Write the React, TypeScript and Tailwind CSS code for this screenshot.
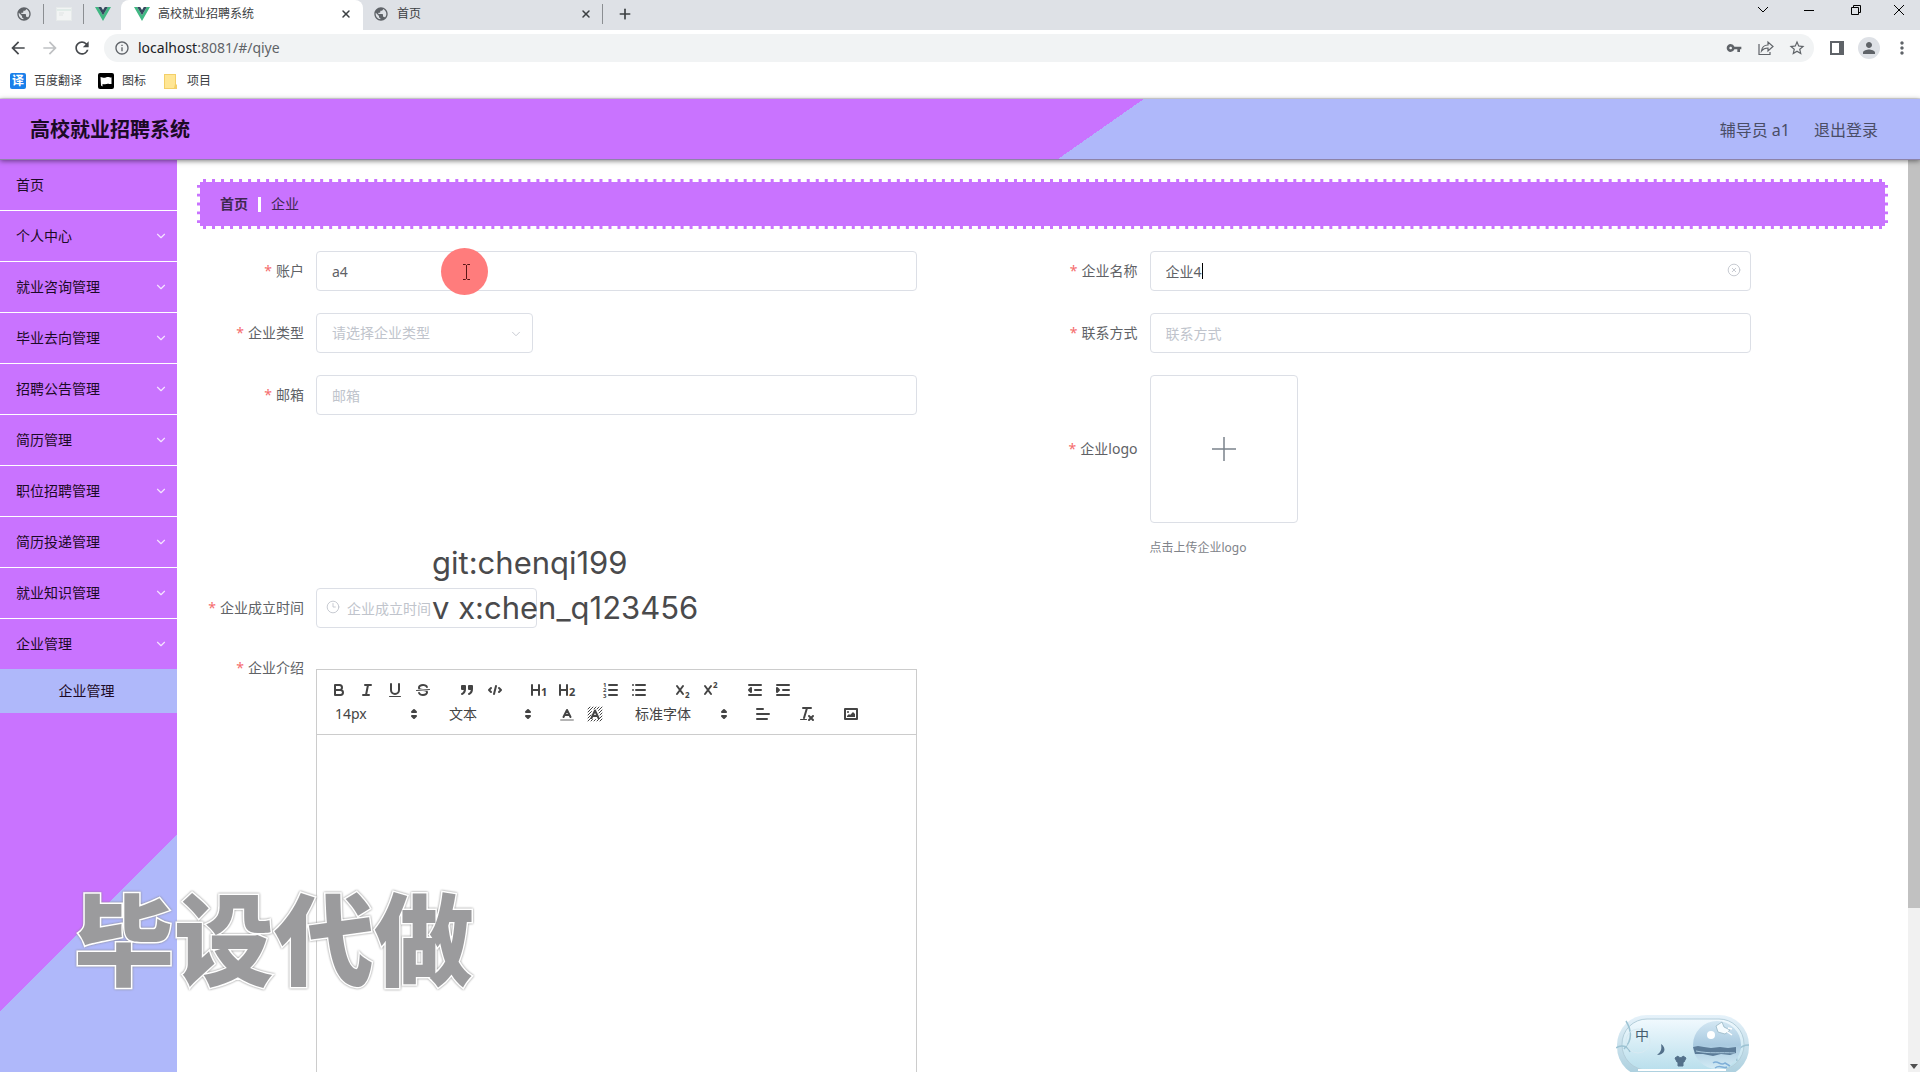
import React from "react";
import type { ReactNode } from "react";
import {
  MdArrowBack,
  MdArrowForward,
  MdInfoOutline,
  MdMoreVert,
  MdPerson,
  MdPublic,
  MdRefresh,
  MdStarBorder,
  MdVpnKey,
} from "react-icons/md";
import { ChevronDown, CircleX, Clock3, Plus, X } from "lucide-react";

const menu = [
  "首页",
  "个人中心",
  "就业咨询管理",
  "毕业去向管理",
  "招聘公告管理",
  "简历管理",
  "职位招聘管理",
  "简历投递管理",
  "就业知识管理",
  "企业管理",
];

function VueLogo() {
  return (
    <svg viewBox="0 0 16 14" className="h-3.5 w-4 shrink-0" aria-hidden="true">
      <path d="M0 0h3.200L8 8.300 12.800 0H16L8 13.900z" fill="#41b883" />
      <path d="M3.200 0h3L8 3.100 9.800 0h3L8 8.300z" fill="#35495e" />
    </svg>
  );
}

function BrowserTabs() {
  return (
    <div className="flex h-[30px] items-stretch bg-[#dee1e6] text-xs text-[#3c4043]">
      <div className="flex w-[121px] items-center rounded-br-lg pb-0.5">
        <button aria-label="新标签页" className="flex w-[43px] justify-center pl-1">
          <MdPublic className="size-4 text-[#5f6368]" />
        </button>
        <span className="h-5 w-px bg-[#8b8e92]" />
        <button aria-label="固定标签页" className="flex w-[39px] justify-center">
          <svg viewBox="0 0 16 14" className="h-3.5 w-4" aria-hidden="true">
            <rect x=".5" y=".5" width="15" height="13" fill="#f2f4f4" stroke="#e6eaea" />
            <path d="M1 3h14" stroke="#cfe3dc" />
            <path d="M3 6h5M3 8h4" stroke="#e0e4e4" />
          </svg>
        </button>
        <span className="h-5 w-px bg-[#8b8e92]" />
        <button aria-label="Vue" className="flex w-[37px] justify-center">
          <VueLogo />
        </button>
      </div>
      <div className="flex w-[242px] items-center rounded-t-lg bg-white pl-[13px] pr-2.5 pb-0.5">
        <VueLogo />
        <span className="ml-2 flex-1 truncate">高校就业招聘系统</span>
        <button aria-label="关闭标签页" className="mr-px">
          <X className="size-3" strokeWidth={3} />
        </button>
      </div>
      <div className="flex w-[240px] items-center px-2.5 pb-0.5">
        <MdPublic className="size-4 text-[#5f6368]" />
        <span className="ml-2 flex-1 truncate">首页</span>
        <button aria-label="关闭标签页">
          <X className="size-3" strokeWidth={3} />
        </button>
        <span className="-mr-2.5 ml-2.5 h-5 w-px bg-[#8b8e92]" />
      </div>
      <button aria-label="新建标签页" className="ml-3.5 pb-0.5">
        <Plus className="size-4" strokeWidth={2.5} />
      </button>
      <div className="ml-auto flex items-center pb-2.5 text-black">
        <button aria-label="搜索标签页" className="flex w-[46px] justify-center">
          <svg viewBox="0 0 12 12" className="size-3" fill="none" stroke="currentColor">
            <path d="M1 3l5 5 5-5" />
          </svg>
        </button>
        <button aria-label="最小化" className="flex w-[46px] justify-center">
          <svg viewBox="0 0 12 12" className="size-3" fill="none" stroke="currentColor">
            <path d="M1 6.500h10" />
          </svg>
        </button>
        <button aria-label="还原" className="flex w-[47px] justify-center">
          <svg viewBox="0 0 12 12" className="size-3" fill="none" stroke="currentColor">
            <path d="M1.500 3.500h7v7h-7zM3.500 3.500v-2h7v7h-2" />
          </svg>
        </button>
        <button aria-label="关闭" className="mr-px flex w-10 justify-center">
          <svg viewBox="0 0 12 12" className="size-3" fill="none" stroke="currentColor">
            <path d="M1 1l10 10M11 1L1 11" />
          </svg>
        </button>
      </div>
    </div>
  );
}

function BrowserToolbar() {
  return (
    <div className="flex h-9 items-center bg-white pl-2 pr-2 text-[#5f6368]">
      <button aria-label="后退" className="mr-3">
        <MdArrowBack className="size-5 text-[#46494d]" />
      </button>
      <button aria-label="前进" className="mr-3">
        <MdArrowForward className="size-5 text-[#bfc1c3]" />
      </button>
      <button aria-label="重新加载" className="mr-3">
        <MdRefresh className="size-5 text-[#46494d]" />
      </button>
      <div className="flex h-7 flex-1 items-center rounded-full bg-[#f1f3f4] pl-2.5 pr-2">
        <MdInfoOutline className="size-4" />
        <div className="ml-2 flex flex-1 text-sm">
          <span className="text-[#202124]">localhost</span>
          <span>:8081/#/qiye</span>
        </div>
        <button aria-label="密码" className="mr-4">
          <MdVpnKey className="size-4" />
        </button>
        <button aria-label="分享" className="mr-3.5">
          <svg viewBox="0 0 16 16" className="size-4" fill="none" stroke="currentColor" strokeWidth="1.200">
            <path d="M1 4v10.500h11V12" />
            <path d="M3.500 11C4 7 6.500 5 10 5V2l5 4.500L10 11V8C7 8 5 9 3.500 11z" />
          </svg>
        </button>
        <button aria-label="收藏">
          <MdStarBorder className="size-[18px]" />
        </button>
      </div>
      <button aria-label="侧边栏" className="ml-4">
        <svg viewBox="0 0 14 14" className="size-3.5" aria-hidden="true">
          <rect x="1" y="1" width="12" height="12" fill="none" stroke="currentColor" strokeWidth="2" />
          <path d="M9 1h4v12H9z" fill="currentColor" />
        </svg>
      </button>
      <button
        aria-label="个人资料"
        className="ml-3.5 flex size-[22px] items-center justify-center rounded-full bg-[#dee1e6]"
      >
        <MdPerson className="size-[18px]" />
      </button>
      <button aria-label="更多" className="ml-3">
        <MdMoreVert className="size-5" />
      </button>
    </div>
  );
}

function Bookmarks() {
  return (
    <nav className="flex h-[33px] items-center border-b border-[#e3e3e6] bg-white pb-0.5 pl-2.5 text-xs text-[#3c4043]">
      <a href="#fanyi" className="flex items-center gap-2">
        <span className="flex size-4 items-center justify-center rounded-xs bg-[#1a80ea] text-xs font-bold text-white">
          译
        </span>
        百度翻译
      </a>
      <a href="#icons" className="ml-4 flex items-center gap-2">
        <svg viewBox="0 0 16 16" className="size-4" aria-hidden="true">
          <rect width="16" height="16" rx="2" />
          <path d="M2.500 4l2 .500c2 .800 3.500-.500 5.500-.500s2 .800 3.500.300v6.700c-2 .300-2.500-.500-4-.300s-2.500 1-5 .300v2.500l-1.500-1z" fill="#fff" />
        </svg>
        图标
      </a>
      <a href="#projects" className="ml-[18px] flex items-center gap-2.5">
        <svg viewBox="0 0 13 15" className="h-[15px] w-[13px]" aria-hidden="true">
          <path d="M0 0h12v10l1 1v4H0z" fill="#f3cf68" />
          <path d="M1 1h10v9l-1 4H1z" fill="#ffe694" />
        </svg>
        项目
      </a>
    </nav>
  );
}

function Sidebar() {
  return (
    <aside className="w-[177px] shrink-0 bg-[linear-gradient(135deg,#c973ff_602px,#afb8fa_602px)] text-sm text-[#1c0a26]">
      <ul>
        {menu.map((name, i) => (
          <li key={name}>
            <button
              className={
                i < menu.length - 1
                  ? "flex h-[51px] w-full items-center justify-between border-b border-white pl-4 pr-[9px]"
                  : "flex h-[50px] w-full items-center justify-between pl-4 pr-[9px]"
              }
            >
              {name}
              {i > 0 && <ChevronDown className="size-3.5 text-white/80" strokeWidth={2} />}
            </button>
          </li>
        ))}
        <li>
          <a href="#/qiye" className="flex h-11 items-center justify-center bg-[#afb8fa] pr-1">
            企业管理
          </a>
        </li>
      </ul>
    </aside>
  );
}

function Field({
  id,
  label,
  tall,
  short,
  children,
}: {
  id: string;
  label: string;
  tall?: boolean;
  short?: boolean;
  children: ReactNode;
}) {
  const height = tall ? "h-[148px]" : short ? "h-9" : "h-10";
  return (
    <div className="flex min-h-0 items-start">
      <label
        htmlFor={id}
        className={`flex w-[109px] shrink-0 items-center justify-end gap-1 whitespace-nowrap pr-3 ${height}`}
      >
        <span className="text-[#f56c6c]">*</span>
        {label}
      </label>
      <div className="h-full min-w-0 flex-1">{children}</div>
    </div>
  );
}

const inputClass =
  "h-10 w-full rounded-sm border border-[#dcdfe6] bg-white px-[15px] text-sm text-[#606266] outline-none placeholder:text-[#c0c4cc]";

function Tool({ name, children }: { name: string; children: ReactNode }) {
  return (
    <button type="button" aria-label={name} className="flex h-6 w-7 items-center justify-center">
      <svg
        viewBox="0 0 18 18"
        className="size-[18px] overflow-visible"
        fill="none"
        stroke="#444"
        strokeWidth="2"
        strokeLinecap="round"
        strokeLinejoin="round"
      >
        {children}
      </svg>
    </button>
  );
}

function Mark({ x, y, size = 8, children }: { x: number; y: number; size?: number; children: ReactNode }) {
  return (
    <text x={x} y={y} fontSize={size} fontWeight="700" fill="#444" stroke="none">
      {children}
    </text>
  );
}

function Picker({ label, wide }: { label: string; wide?: boolean }) {
  return (
    <div className={wide ? "relative flex h-6 w-[108px] items-center" : "relative flex h-6 w-[98px] items-center"}>
      <select aria-label={label} className="h-6 w-full appearance-none bg-transparent pl-2.5 text-sm text-[#444] outline-none">
        <option>{label}</option>
      </select>
      <svg viewBox="0 0 18 18" className="pointer-events-none absolute right-0 size-[18px]" fill="#444" stroke="#444" strokeWidth="2" strokeLinejoin="round">
        <path d="M7 11l2 2 2-2zM7 7l2-2 2 2z" />
      </svg>
    </div>
  );
}

function Editor() {
  return (
    <div className="mt-[19px] flex h-full w-[83%] flex-col border border-[#ccc]">
      <div className="flex flex-col border-b border-[#ccc] p-2">
        <div className="flex gap-4">
          <div className="flex">
            <Tool name="加粗">
              <path d="M5 4h4.500a2.500 2.500 0 0 1 0 5H5zM5 9h5.500a2.500 2.500 0 0 1 0 5H5z" />
            </Tool>
            <Tool name="斜体">
              <path d="M7 4h6M5 14h6M8 14l2-10" />
            </Tool>
            <Tool name="下划线">
              <path d="M5 3v6a4 4 0 0 0 8 0V3" />
              <rect x="3" y="15" width="12" height="1" rx=".5" fill="#444" stroke="none" />
            </Tool>
            <Tool name="删除线">
              <path d="M15.500 8.500l-13 1" strokeWidth="1" />
              <path
                stroke="none"
                fill="#444"
                d="M9.007,8C6.542,7.791,6,7.519,6,6.500,6,5.792,7.283,5,9,5c1.571,0,2.765.679,2.969,1.309a1,1,0,0,0,1.900-.617C13.356,4.106,11.354,3,9,3,6.200,3,4,4.538,4,6.500a3.200,3.200,0,0,0,.5,1.843Z"
              />
              <path
                stroke="none"
                fill="#444"
                d="M8.984,10C11.457,10.208,12,10.479,12,11.500c0,.708-1.283,1.500-3,1.500-1.571,0-2.765-.679-2.969-1.309a1,1,0,1,0-1.900.617C4.644,13.894,6.646,15,9,15c2.800,0,5-1.538,5-3.500a3.200,3.200,0,0,0-.5-1.843Z"
              />
            </Tool>
          </div>
          <div className="flex">
            <Tool name="引用">
              <path fill="#444" d="M4 5h3v3H4zM11 5h3v3h-3zM7 8c0 4-3 5-3 5M14 8c0 4-3 5-3 5" />
            </Tool>
            <Tool name="代码">
              <path d="M5 7L3 9l2 2M13 7l2 2-2 2M10 5L8 13" />
            </Tool>
          </div>
          <div className="flex">
            <Tool name="标题 1">
              <path d="M2 4v10M9 4v10M2 9h7" />
              <Mark x={11} y={15} size={11}>1</Mark>
            </Tool>
            <Tool name="标题 2">
              <path d="M2 4v10M9 4v10M2 9h7" />
              <Mark x={11} y={15} size={11}>2</Mark>
            </Tool>
          </div>
          <div className="flex">
            <Tool name="有序列表">
              <path d="M7 4h8M7 9h8M7 14h8" />
              <Mark x={1} y={6} size={6}>1</Mark>
              <Mark x={1} y={11} size={6}>2</Mark>
              <Mark x={1} y={17} size={6}>3</Mark>
            </Tool>
            <Tool name="无序列表">
              <path d="M6 4h9M6 9h9M6 14h9M3 4h0M3 9h0M3 14h0" />
            </Tool>
          </div>
          <div className="flex">
            <Tool name="下标">
              <path d="M3 5l6 8M9 5l-6 8" />
              <Mark x={11} y={17}>2</Mark>
            </Tool>
            <Tool name="上标">
              <path d="M3 5l6 8M9 5l-6 8" />
              <Mark x={11} y={7}>2</Mark>
            </Tool>
          </div>
          <div className="flex">
            <Tool name="减少缩进">
              <path d="M3 14h12M3 4h12M9 9h6M5 7v4L3 9z" />
            </Tool>
            <Tool name="增加缩进">
              <path d="M3 14h12M3 4h12M9 9h6M3 7v4l2-2z" />
            </Tool>
          </div>
        </div>
        <div className="flex gap-4">
          <Picker label="14px" />
          <Picker label="文本" />
          <div className="flex">
            <Tool name="文字颜色">
              <path d="M3 15h12" opacity=".4" />
              <path d="M5.500 12L9 5l3.500 7M6.400 10h5.200" />
            </Tool>
            <Tool name="背景颜色">
              <path
                d="M2 4l2-2M2 7l5-5M2 10l3.500-3.500M8 4l2-2M2 13l3-3M11 4l2-2M2 16l3-3M12.500 5.500L16 2M5 16l1.500-1.500M13 8l3-3M8 16l1.500-1.500M14 10l2-2M11 16l5-5M14 16l2-2"
                strokeWidth="1"
              />
              <path d="M5.500 13L9 5.500l3.500 7.500M6.400 11h5.200" />
            </Tool>
          </div>
          <Picker label="标准字体" wide />
          <Tool name="对齐">
            <path d="M3 9h12M3 14h10M3 4h6" />
          </Tool>
          <Tool name="清除格式">
            <path d="M5 3h8M6 13l3-10M11 11l4 4M15 11l-4 4" />
            <rect x="2" y="14" width="7" height="1" rx=".5" fill="#444" stroke="none" />
          </Tool>
          <Tool name="图片">
            <rect x="3" y="4" width="12" height="10" />
            <circle cx="6" cy="7" r="1" fill="#444" stroke="none" />
            <path stroke="none" fill="#444" d="M5 12v-1l2-2 1 1 3-3 2 2v3z" />
          </Tool>
        </div>
      </div>
      <textarea id="intro" className="w-full flex-1 resize-none p-3 outline-none" />
    </div>
  );
}

function CompanyForm() {
  return (
    <form className="mt-[22px] flex min-h-0 flex-1 flex-col gap-[22px] pl-2.5 pr-3.5 text-sm text-[#606266]">
      <div className="grid grid-cols-2 gap-y-[22px]">
        <Field id="account" label="账户">
          <div className="relative w-[83%]">
            <input id="account" defaultValue="a4" className={inputClass} />
            <div className="absolute left-[125px] top-[-3px] flex size-[47px] items-center justify-center rounded-full bg-[#ff7c7c]">
              <svg viewBox="0 0 9 18" className="ml-1 h-[18px] w-[9px]" fill="none" stroke="#5a1616" aria-hidden="true">
                <path d="M1 1.500h2.500l1 1 1-1H8M1 16.500h2.500l1-1 1 1H8M4.500 2v14" />
              </svg>
            </div>
          </div>
        </Field>
        <Field id="company" label="企业名称">
          <div className="relative w-[83%]">
            <input id="company" defaultValue="企业4" className={inputClass} />
            <span className="absolute left-[52px] top-3 h-4 w-px bg-black" />
            <button type="button" aria-label="清空" className="absolute right-2.5 top-3">
              <CircleX className="size-3.5 text-[#c0c4cc]" strokeWidth={1.5} />
            </button>
          </div>
        </Field>
        <Field id="type" label="企业类型">
          <div className="relative w-[30%]">
            <select
              id="type"
              className="h-10 w-full appearance-none rounded-sm border border-[#dcdfe6] bg-white px-[15px] text-sm text-[#c0c4cc] outline-none"
            >
              <option>请选择企业类型</option>
            </select>
            <ChevronDown className="pointer-events-none absolute right-2.5 top-3.5 size-3.5 text-[#c0c4cc]" strokeWidth={1.5} />
          </div>
        </Field>
        <Field id="phone" label="联系方式">
          <div className="w-[83%]">
            <input id="phone" placeholder="联系方式" className={inputClass} />
          </div>
        </Field>
        <Field id="email" label="邮箱">
          <div className="w-[83%]">
            <input id="email" placeholder="邮箱" className={inputClass} />
          </div>
        </Field>
        <Field id="logo" label="企业logo" tall>
          <button
            id="logo"
            type="button"
            aria-label="上传企业logo"
            className="flex size-[148px] items-center justify-center rounded-sm border border-[#dcdfe6]"
          >
            <svg viewBox="0 0 24 24" className="size-6" stroke="#7b838c" strokeWidth="1.500" aria-hidden="true">
              <path d="M12 0v24M0 12h24" />
            </svg>
          </button>
          <p className="mt-[7px] h-9 text-xs leading-9 text-[#808389]">点击上传企业logo</p>
        </Field>
      </div>
      <Field id="founded" label="企业成立时间">
        <div className="relative w-[221px]">
          <input
            id="founded"
            placeholder="企业成立时间"
            className="h-10 w-full rounded-sm border border-[#dcdfe6] bg-white pl-[30px] text-sm outline-none placeholder:text-[#c0c4cc]"
          />
          <Clock3 className="absolute left-2.5 top-3 size-3.5 text-[#c0c4cc]" strokeWidth={1.5} />
        </div>
      </Field>
      <div className="flex min-h-0 flex-1 flex-col">
        <div className="grid flex-1 grid-cols-2">
          <Field id="intro" label="企业介绍" short>
            <Editor />
          </Field>
        </div>
      </div>
    </form>
  );
}

function ImeBar() {
  return (
    <div className="absolute bottom-0 right-[170px] h-[58px] w-[134px] overflow-hidden" aria-hidden="true">
      <svg viewBox="0 0 134 58" className="h-[58px] w-[134px]">
        <defs>
          <linearGradient id="shell" x1="0" y1="0" x2="0" y2="1">
            <stop offset="0" stopColor="#e6f2fa" />
            <stop offset="1" stopColor="#a9cedd" />
          </linearGradient>
          <linearGradient id="inner" x1="0" y1="0" x2="0" y2="1">
            <stop offset="0" stopColor="#f1f9fe" />
            <stop offset="1" stopColor="#b9dfec" />
          </linearGradient>
          <linearGradient id="globe" x1="0" y1="0" x2="0" y2="1">
            <stop offset="0" stopColor="#d3e7f3" />
            <stop offset=".5" stopColor="#a9cae0" />
            <stop offset="1" stopColor="#d3ebf5" />
          </linearGradient>
        </defs>
        <rect x="1" y="1" width="132" height="62" rx="30" fill="url(#shell)" />
        <rect x="6" y="5" width="122" height="51" rx="25" fill="url(#inner)" stroke="#b4ceda" />
        <path d="M22 56h88" stroke="#fff" strokeWidth="2" />
        <path d="M10 7c6 10 6 20-2 28M0 34c5-4 12-2 14 4M133 31c-10 0-14 8-12 16" fill="none" stroke="#9dc3d3" strokeWidth="1.500" />
        <circle cx="101" cy="31" r="24" fill="url(#globe)" />
        <path d="M77 33l5-1 6 1 7 1 9-1 8 1 8-1v6l-6 2-9-1-8 2-10-2-8 0z" fill="#5c7c98" />
        <path d="M80 37c14 3 24 1 39 2" stroke="#a9c8dc" fill="none" />
        <circle cx="95" cy="21" r="4" fill="#fff" />
        <path d="M100 12l6-4 2 5 6 3-5 4-7-2z" fill="#f6fcff" stroke="#8fb0bf" strokeWidth=".7" />
        <path d="M110 17l6 4M112 14l4 1" stroke="#fff" strokeWidth="1.500" />
        <path d="M97 49c5-4 7 4 12 0l5 3M99 54c5-4 8 1 12-1" fill="none" stroke="#7fafd8" strokeWidth="1.500" />
        <circle cx="22" cy="27" r="12" fill="none" stroke="#d8eaf2" />
        <path d="M45 30c6 4 4 11-4 11 4-3 5-6 4-11z" fill="#53708a" />
        <path d="M59 44l3-2c1 2 4 2 5 0l3 2-2 4h-1v4h-5v-4h-1z" fill="#53708a" stroke="#53708a" strokeLinejoin="round" />
        <text x="19" y="26" fontSize="14" fill="#465d70">中</text>
      </svg>
    </div>
  );
}

export default function App() {
  return (
    <div className="relative flex h-screen flex-col overflow-hidden bg-white font-['Noto_Sans','Noto_Sans_CJK_SC',sans-serif]">
      <BrowserTabs />
      <BrowserToolbar />
      <Bookmarks />
      <header className="z-10 flex h-[61px] shrink-0 items-center justify-between border-b border-[#8d83a8] bg-[linear-gradient(145deg,#c973ff_656px,#afb8fa_656px)] pl-[30px] pr-[42px] pt-0.5 shadow-[0_1px_5px_rgba(0,0,0,0.5)]">
        <h1 className="text-xl font-bold text-[#1c0a26]">高校就业招聘系统</h1>
        <div className="flex gap-6 text-base text-[#4a4d66]">
          <span>辅导员 a1</span>
          <a href="#/login">退出登录</a>
        </div>
      </header>
      <div className="flex min-h-0 flex-1">
        <Sidebar />
        <main className="flex min-w-0 flex-1 flex-col px-5 pt-[19px]">
          <nav className="flex h-[50px] shrink-0 items-center gap-2.5 border-3 border-dashed border-white bg-[#c973ff] pl-5 text-sm text-[#3f2850]">
            <a href="#/" className="font-bold">
              首页
            </a>
            <span className="h-[15px] w-[3px] bg-white" />
            <a href="#/qiye">企业</a>
          </nav>
          <CompanyForm />
        </main>
        <div className="flex w-3 shrink-0 flex-col justify-between bg-[#f1f1f1]" aria-hidden="true">
          <div className="h-[82%] bg-[#c1c1c1]" />
          <svg viewBox="0 0 12 12" className="size-3">
            <path d="M2 4h8l-4 5z" fill="#505050" />
          </svg>
        </div>
      </div>

      <div className="pointer-events-none absolute left-[432px] top-[540px] z-20 whitespace-pre font-['Inter',sans-serif] text-[31px] leading-[45px] text-[#4a4a4c]">
        <p>git:chenqi199</p>
        <p>v x:chen_q123456</p>
      </div>
      <p className="pointer-events-none absolute left-[74px] top-[879px] z-20 whitespace-nowrap text-[100px] font-black leading-[120px] text-[#9b9b9d] [-webkit-text-stroke:3px_white] [paint-order:stroke_fill] drop-shadow-[0_0_1px_#888]">
        毕设代做
      </p>
      <ImeBar />
    </div>
  );
}
